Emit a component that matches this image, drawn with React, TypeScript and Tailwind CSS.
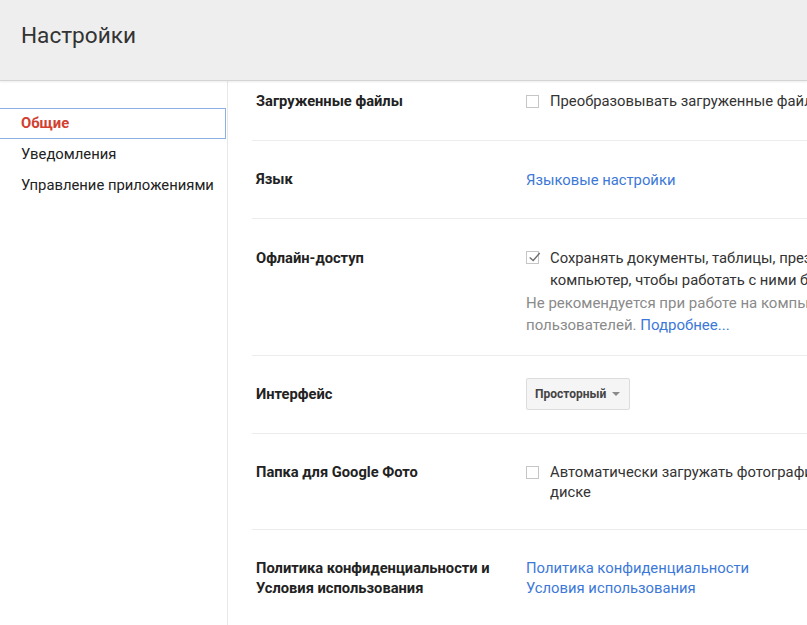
import React from "react";

function Checkbox({ checked }: { checked?: boolean }) {
  return (
    <span className="relative mt-[4px] h-[13px] w-[13px] shrink-0 border border-[#c6c6c6] bg-white">
      {checked && (
        <svg
          viewBox="0 0 16 16"
          className="absolute left-[0px] top-[-2px] h-[14px] w-[15px]"
          fill="none"
        >
          <path d="M2.5 8.5 L6.5 12 L14 3.5" stroke="#6f6f6f" strokeWidth="1.6" />
        </svg>
      )}
    </span>
  );
}

function Row({
  label,
  className,
  children,
}: {
  label: React.ReactNode;
  className: string;
  children: React.ReactNode;
}) {
  return (
    <div className={`flex border-b border-[#ececec] ${className}`}>
      <div className="w-[274px] shrink-0 pl-[4px] text-[14.7px] font-bold leading-[20px] text-[#222]">
        {label}
      </div>
      <div className="w-[560px] shrink-0 text-[14.8px] text-[#333]">{children}</div>
    </div>
  );
}

const navItems = ["Общие", "Уведомления", "Управление приложениями"];

export default function App() {
  return (
    <div className="h-[625px] w-full overflow-hidden bg-white font-['Roboto',sans-serif]">
      <header className="relative z-10 h-[81px] border-b border-[#d4d4d4] bg-[#eeeeee] pl-[21px] pt-[22px] shadow-[0_1px_2px_rgba(0,0,0,0.08)]">
        <h1 className="text-[22.6px] leading-[28px] text-[#333]">Настройки</h1>
      </header>

      <div className="flex h-[544px]">
        <nav className="w-[228px] shrink-0 border-r border-[#e8e8e8] pt-[27px]">
          {navItems.map((item, i) => (
            <div
              key={item}
              className={
                i === 0
                  ? "-ml-px flex h-[31px] w-[227px] items-center border border-[#8fb0e6] pl-[21px] text-[14.8px] font-bold text-[#d2402f]"
                  : "flex h-[31px] items-center pl-[21px] text-[14.8px] text-[#222]"
              }
            >
              {item}
            </div>
          ))}
        </nav>

        <main className="min-w-0 flex-1 overflow-hidden pl-[24px]">
          <Row label="Загруженные файлы" className="pt-[10px] pb-[29px]">
            <div className="flex gap-[11px] leading-[20px]">
              <Checkbox />
              <span className="whitespace-nowrap">
                Преобразовывать загруженные файлы в формат редактора Google
              </span>
            </div>
          </Row>

          <Row label="Язык" className="pt-[28px] pb-[27px]">
            <a className="leading-[20px] text-[#3c78d8]">Языковые настройки</a>
          </Row>

          <Row label={<span className="leading-[22px]">Офлайн-доступ</span>} className="pt-[28px] pb-[19px]">
            <div className="flex gap-[11px] leading-[22px]">
              <Checkbox checked />
              <div className="whitespace-nowrap">
                <div>
                  Сохранять документы, таблицы, презентации и рисунки на этот
                  <br />
                  компьютер, чтобы работать с ними без подключения к Интернету
                </div>
                <div className="-ml-[24px] mt-px text-[15px] text-[#8a8a8a]">
                  Не рекомендуется при работе на компьютерах общего доступа или
                  <br />
                  пользователей. <a className="text-[#3c78d8]">Подробнее...</a>
                </div>
              </div>
            </div>
          </Row>

          <Row
            label={<span className="block leading-[32px]">Интерфейс</span>}
            className="pt-[22px] pb-[23px]"
          >
            <div className="flex h-[32px] w-[104px] items-center gap-[6px] rounded-[2px] border border-[#dcdcdc] bg-[#f5f5f5] pl-[8px] text-[12px] font-bold text-[#444]">
              Просторный
              <svg viewBox="0 0 8 4" className="h-[4px] w-[8px]">
                <path d="M0 0 L8 0 L4 4 Z" fill="#8a8a8a" />
              </svg>
            </div>
          </Row>

          <Row label="Папка для Google Фото" className="pt-[28px] pb-[27px]">
            <div className="flex gap-[11px] leading-[20px]">
              <Checkbox />
              <span className="whitespace-nowrap">
                Автоматически загружать фотографии из Google Фото в папку на
                <br />
                диске
              </span>
            </div>
          </Row>

          <Row
            label={
              <>
                Политика конфиденциальности и
                <br />
                Условия использования
              </>
            }
            className="pt-[28px] pb-[28px]"
          >
            <div className="flex flex-col leading-[20px] text-[#3c78d8]">
              <a>Политика конфиденциальности</a>
              <a>Условия использования</a>
            </div>
          </Row>
        </main>
      </div>
    </div>
  );
}
